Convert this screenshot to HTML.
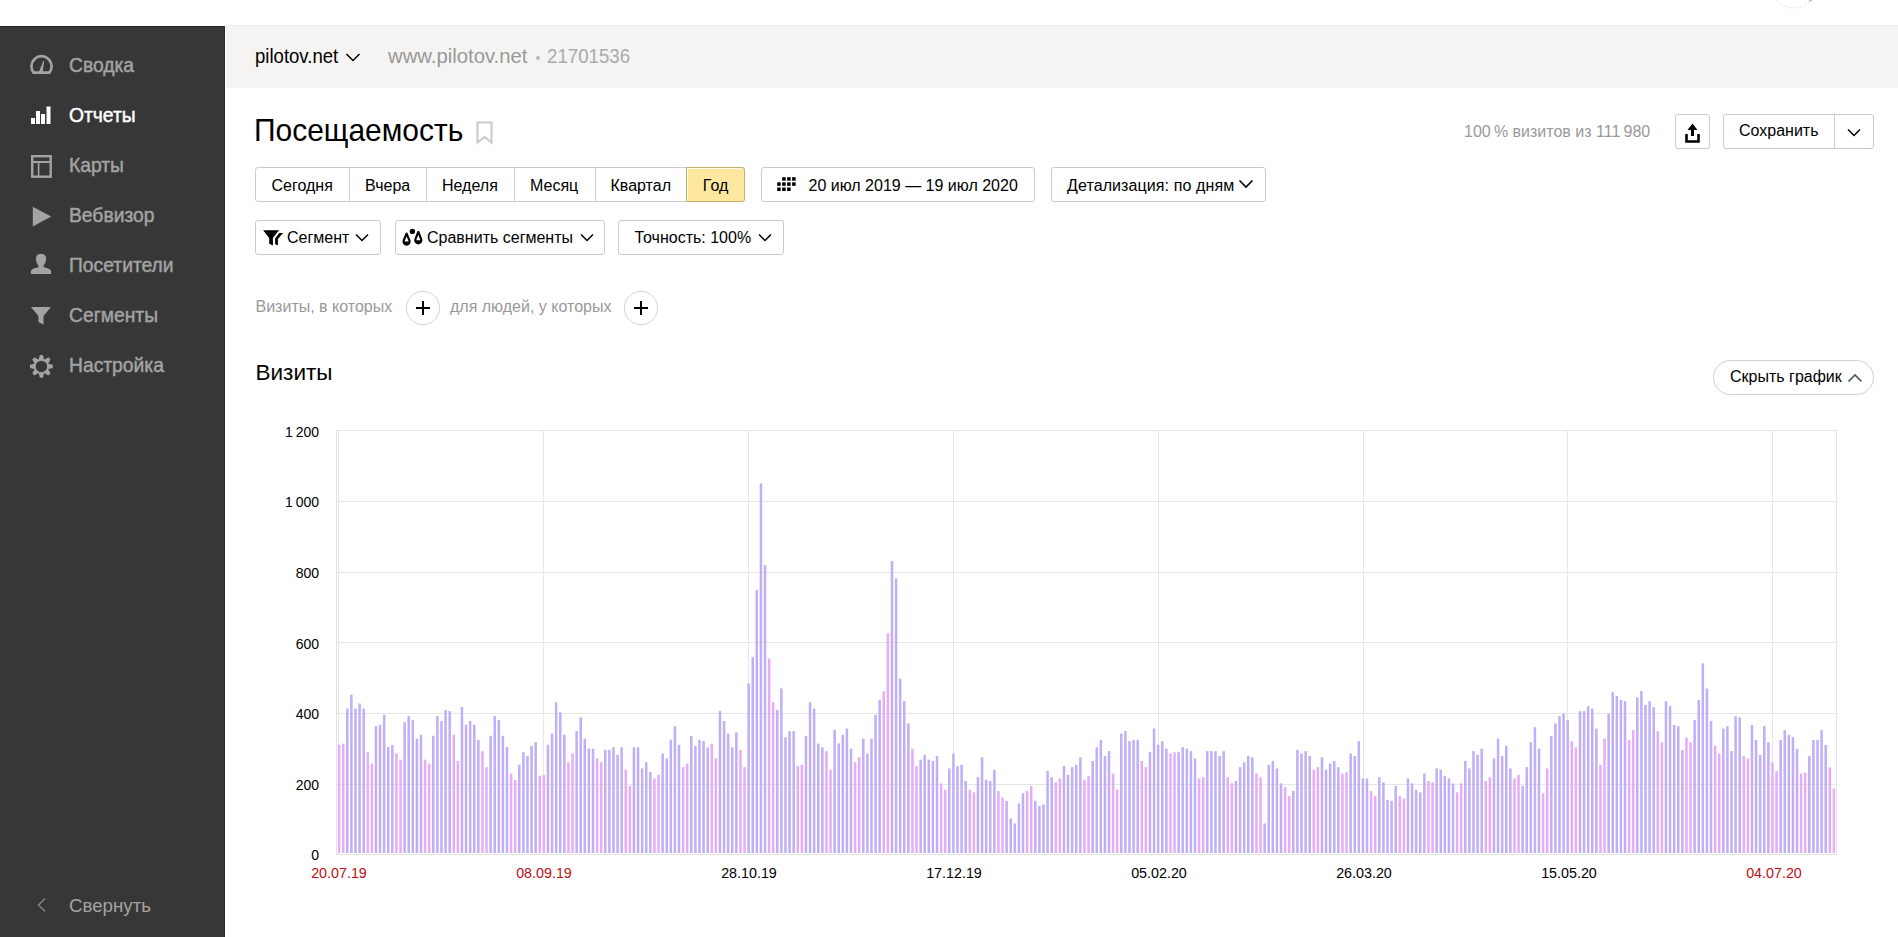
<!DOCTYPE html>
<html><head><meta charset="utf-8">
<style>
*{box-sizing:border-box;margin:0;padding:0}
html,body{width:1898px;height:937px;overflow:hidden;background:#fff;font-family:"Liberation Sans",sans-serif;color:#000}
.abs{position:absolute}
#side{left:0;top:26px;width:225px;height:911px;background:#373737;border-top:1px solid #262626;border-right:1px solid #2a2a2a}
#hdr{left:226px;top:25px;width:1672px;height:63px;background:#f5f4f2;border-top:1px solid #ececec}
.t{position:absolute;white-space:nowrap;line-height:1}
.btn{position:absolute;height:35px;border:1px solid #cbcbcb;border-radius:3px;background:#fff}
</style></head><body>
<svg class="abs" style="left:0;top:0" width="1898" height="20"><circle cx="1794" cy="-16.25" r="24.25" fill="none" stroke="#e2e2e2" stroke-width="1" stroke-dasharray="2.5 2.5"/><path d="M1807 -1 L1814 -1 L1810.5 2 Z" fill="#c4c4c4"/></svg>
<div id="side" class="abs"></div>
<div class="t" style="left:69px;top:55.66px;font-size:19.3px;color:#a3a3a3;font-weight:400;-webkit-text-stroke:.45px #a3a3a3;">Сводка</div>
<div class="t" style="left:69px;top:105.66px;font-size:19.3px;color:#fff;font-weight:400;-webkit-text-stroke:.45px #fff;">Отчеты</div>
<div class="t" style="left:69px;top:155.66px;font-size:19.3px;color:#a3a3a3;font-weight:400;-webkit-text-stroke:.45px #a3a3a3;">Карты</div>
<div class="t" style="left:69px;top:205.66px;font-size:19.3px;color:#a3a3a3;font-weight:400;-webkit-text-stroke:.45px #a3a3a3;">Вебвизор</div>
<div class="t" style="left:69px;top:255.66px;font-size:19.3px;color:#a3a3a3;font-weight:400;-webkit-text-stroke:.45px #a3a3a3;">Посетители</div>
<div class="t" style="left:69px;top:305.66px;font-size:19.3px;color:#a3a3a3;font-weight:400;-webkit-text-stroke:.45px #a3a3a3;">Сегменты</div>
<div class="t" style="left:69px;top:355.66px;font-size:19.3px;color:#a3a3a3;font-weight:400;-webkit-text-stroke:.45px #a3a3a3;">Настройка</div>
<svg class="abs" style="left:0;top:0" width="225" height="937">
<path d="M33.6 72.6 A 10.1 10.1 0 1 1 49.4 72.6 Z" fill="none" stroke="#a3a3a3" stroke-width="2.7" stroke-linejoin="round"/>
<path d="M38.6 72.5 L42.6 72.5 L44.2 61 L43.4 61 Z" fill="#a3a3a3"/>
<rect x="31" y="118" width="4" height="6" fill="#fff"/><rect x="36" y="111" width="4" height="13" fill="#fff"/><rect x="41" y="114" width="4" height="10" fill="#fff"/><rect x="46.5" y="106.5" width="4" height="17.5" fill="#fff"/>
<rect x="32.2" y="156.2" width="18.5" height="20.5" fill="none" stroke="#a3a3a3" stroke-width="2.4"/>
<rect x="33" y="161" width="17" height="2" fill="#a3a3a3"/><rect x="37.8" y="162" width="1.6" height="14" fill="#a3a3a3"/>
<path d="M32.8 206.8 L51.2 216.6 L32.8 226.5 Z" fill="#a3a3a3"/>
<path d="M30.9 274 L30.9 271.2 Q31.3 268.4 37.6 267.4 Q38.6 267 38.5 265.8 Q35.8 262.6 35.9 258.8 Q36.1 253.7 41 253.7 Q45.9 253.7 46.1 258.8 Q46.2 262.6 43.5 265.8 Q43.4 267 44.4 267.4 Q50.7 268.4 51.1 271.2 L51.1 274 Z" fill="#a3a3a3"/>
<path d="M30.9 306.9 L50.9 306.9 L43.6 316 L43.4 324.4 L38.4 321.9 L38.4 316 Z" fill="#a3a3a3"/>
<g transform="translate(41.4 366.4)"><circle r="6.55" fill="none" stroke="#a3a3a3" stroke-width="1.6"/>
<path d="M-2.9 -6.2 L2.9 -6.2 L1.55 -11.4 L-1.55 -11.4 Z" fill="#a3a3a3" transform="rotate(0)"/><path d="M-2.9 -6.2 L2.9 -6.2 L1.55 -11.4 L-1.55 -11.4 Z" fill="#a3a3a3" transform="rotate(45)"/><path d="M-2.9 -6.2 L2.9 -6.2 L1.55 -11.4 L-1.55 -11.4 Z" fill="#a3a3a3" transform="rotate(90)"/><path d="M-2.9 -6.2 L2.9 -6.2 L1.55 -11.4 L-1.55 -11.4 Z" fill="#a3a3a3" transform="rotate(135)"/><path d="M-2.9 -6.2 L2.9 -6.2 L1.55 -11.4 L-1.55 -11.4 Z" fill="#a3a3a3" transform="rotate(180)"/><path d="M-2.9 -6.2 L2.9 -6.2 L1.55 -11.4 L-1.55 -11.4 Z" fill="#a3a3a3" transform="rotate(225)"/><path d="M-2.9 -6.2 L2.9 -6.2 L1.55 -11.4 L-1.55 -11.4 Z" fill="#a3a3a3" transform="rotate(270)"/><path d="M-2.9 -6.2 L2.9 -6.2 L1.55 -11.4 L-1.55 -11.4 Z" fill="#a3a3a3" transform="rotate(315)"/></g>
<path d="M45 898.5 L38.5 905 L45 911.5" fill="none" stroke="#8a8a8a" stroke-width="1.3"/>
</svg>
<div class="t" style="left:69px;top:896.87px;font-size:18.7px;color:#a3a3a3;font-weight:400;">Свернуть</div>
<div id="hdr" class="abs"></div>
<div class="t" style="left:255px;top:45.71px;font-size:20.3px;color:#000;font-weight:400;transform:scaleX(0.915);transform-origin:0 0;">pilotov.net</div>
<svg class="abs" style="left:340px;top:48px" width="30" height="20"><path d="M6.5 6 L13 12.5 L19.5 6" fill="none" stroke="#000" stroke-width="1.5"/></svg>
<div class="t" style="left:388px;top:45.71px;font-size:20.3px;color:#999;font-weight:400;">www.pilotov.net</div>
<div class="abs" style="left:535.5px;top:55.5px;width:4px;height:4px;border-radius:2px;background:#bbb"></div>
<div class="t" style="left:547.3px;top:45.71px;font-size:20.3px;color:#aaa;font-weight:400;transform:scaleX(0.92);transform-origin:0 0;">21701536</div>
<div class="t" style="left:254px;top:115.08px;font-size:30.5px;color:#000;font-weight:400;transform:scaleX(0.982);transform-origin:0 0;">Посещаемость</div>
<svg class="abs" style="left:470px;top:118px" width="30" height="30"><path d="M7.5 4.5 L21.5 4.5 L21.5 24.5 L14.5 19 L7.5 24.5 Z" fill="none" stroke="#ccc" stroke-width="2.2"/></svg>
<div class="t" style="left:1464px;top:123.85px;font-size:16px;color:#999;font-weight:400;">100&thinsp;% визитов из 111&thinsp;980</div>
<div class="btn" style="left:1675px;top:114px;width:35px"></div>
<svg class="abs" style="left:1675px;top:114px" width="35" height="35"><path d="M17.5 9.5 L22.5 16 L19 16 L19 22 L16 22 L16 16 L12.5 16 Z" fill="#000"/><path d="M11.5 20 L11.5 27.5 L23.5 27.5 L23.5 20" fill="none" stroke="#000" stroke-width="2.6"/></svg>
<div class="btn" style="left:1723px;top:114px;width:151px"></div>
<div class="abs" style="left:1834px;top:115px;width:1px;height:33px;background:#cbcbcb"></div>
<div class="t" style="left:1739px;top:123.15px;font-size:16px;color:#000;font-weight:400;">Сохранить</div>
<svg class="abs" style="left:1834px;top:115.5px" width="40" height="35"><path d="M14 13.5 L20 19.5 L26 13.5" fill="none" stroke="#000" stroke-width="1.5"/></svg>
<div class="abs" style="left:255px;top:167px;width:490px;height:35px;border:1px solid #cbcbcb;border-radius:3px;background:#fff"></div>
<div class="abs" style="left:349px;top:168px;width:1px;height:33px;background:#cbcbcb"></div>
<div class="abs" style="left:426px;top:168px;width:1px;height:33px;background:#cbcbcb"></div>
<div class="abs" style="left:514px;top:168px;width:1px;height:33px;background:#cbcbcb"></div>
<div class="abs" style="left:595px;top:168px;width:1px;height:33px;background:#cbcbcb"></div>
<div class="abs" style="left:686px;top:167px;width:59px;height:35px;background:#fee8a0;border:1px solid #c6b16c;border-radius:0 3px 3px 0;box-shadow:inset 1px 1px 0 #fffbea"></div>
<div class="t" style="left:271.5px;top:177.95px;font-size:16px;color:#000;font-weight:400;">Сегодня</div>
<div class="t" style="left:365px;top:177.95px;font-size:16px;color:#000;font-weight:400;">Вчера</div>
<div class="t" style="left:442px;top:177.95px;font-size:16px;color:#000;font-weight:400;">Неделя</div>
<div class="t" style="left:530px;top:177.95px;font-size:16px;color:#000;font-weight:400;">Месяц</div>
<div class="t" style="left:610.5px;top:177.95px;font-size:16px;color:#000;font-weight:400;">Квартал</div>
<div class="t" style="left:702.8px;top:177.95px;font-size:16px;color:#000;font-weight:400;">Год</div>
<div class="btn" style="left:761px;top:167px;width:274px"></div>
<svg class="abs" style="left:0;top:0" width="1000" height="220"><rect x="782.17" y="177.20" width="3.5" height="3.5" fill="#000"/><rect x="787.14" y="177.20" width="3.5" height="3.5" fill="#000"/><rect x="792.11" y="177.20" width="3.5" height="3.5" fill="#000"/><rect x="777.20" y="182.35" width="3.5" height="3.5" fill="#000"/><rect x="782.17" y="182.35" width="3.5" height="3.5" fill="#000"/><rect x="787.14" y="182.35" width="3.5" height="3.5" fill="#000"/><rect x="792.11" y="182.35" width="3.5" height="3.5" fill="#000"/><rect x="777.20" y="187.50" width="3.5" height="3.5" fill="#000"/><rect x="782.17" y="187.50" width="3.5" height="3.5" fill="#000"/><rect x="787.14" y="187.50" width="3.5" height="3.5" fill="#000"/></svg>
<div class="t" style="left:808.5px;top:177.95px;font-size:16px;color:#000;font-weight:400;">20 июл 2019 — 19 июл 2020</div>
<div class="btn" style="left:1051px;top:167px;width:215px"></div>
<div class="t" style="left:1067px;top:177.95px;font-size:16px;color:#000;font-weight:400;letter-spacing:.1px;">Детализация: по дням</div>
<svg class="abs" style="left:1236px;top:176px" width="20" height="16"><path d="M3.5 4.5 L10 11 L16.5 4.5" fill="none" stroke="#000" stroke-width="1.6"/></svg>
<div class="btn" style="left:255px;top:220px;width:126px"></div>
<svg class="abs" style="left:0;top:0" width="800" height="260"><path d="M263.1 230.2 L279 230.2 L272.9 238 L272.9 245.4 L269.2 243.8 L269.2 238 Z" fill="#000"/><path d="M279.3 233 L283 233 L277.9 239 L277.9 245.4 L275.1 244 L275.1 238.5 Z" fill="#000"/></svg>
<div class="t" style="left:287px;top:229.55px;font-size:16px;color:#000;font-weight:400;">Сегмент</div>
<svg class="abs" style="left:351.5px;top:229.2px" width="20" height="16"><path d="M4 5.5 L10 11.5 L16 5.5" fill="none" stroke="#000" stroke-width="1.5"/></svg>
<div class="btn" style="left:395px;top:220px;width:210px"></div>
<svg class="abs" style="left:0;top:0" width="800" height="260"><path d="M406.6 233.55 L409.42 240.39 A3.05 3.05 0 1 1 403.78 240.39 Z" fill="none" stroke="#000" stroke-width="2.2" stroke-linejoin="round"/><path d="M403.55 241.55 A3.05 3.05 0 0 0 409.65 241.55 Z" fill="#000"/><circle cx="412.4" cy="231.4" r="2.7" fill="#000"/><path d="M418.3 231.95 L421.14 239.13 A3.05 3.05 0 1 1 415.46 239.13 Z" fill="none" stroke="#000" stroke-width="2.2" stroke-linejoin="round"/><path d="M415.25 240.25 A3.05 3.05 0 0 0 421.35 240.25 Z" fill="#000"/></svg>
<div class="t" style="left:427px;top:229.55px;font-size:16px;color:#000;font-weight:400;">Сравнить сегменты</div>
<svg class="abs" style="left:576.5px;top:229.2px" width="20" height="16"><path d="M4 5.5 L10 11.5 L16 5.5" fill="none" stroke="#000" stroke-width="1.5"/></svg>
<div class="btn" style="left:618px;top:220px;width:166px"></div>
<div class="t" style="left:634.5px;top:229.55px;font-size:16px;color:#000;font-weight:400;">Точность: 100%</div>
<svg class="abs" style="left:754.5px;top:229.2px" width="20" height="16"><path d="M4 5.5 L10 11.5 L16 5.5" fill="none" stroke="#000" stroke-width="1.5"/></svg>
<div class="t" style="left:255.5px;top:298.65px;font-size:16px;color:#999;font-weight:400;">Визиты, в которых</div>
<div class="t" style="left:450px;top:298.65px;font-size:16px;color:#999;font-weight:400;">для людей, у которых</div>
<svg class="abs" style="left:404.6px;top:290px" width="36" height="36"><circle cx="18" cy="18" r="16.6" fill="#fff" stroke="#d3d3d3" stroke-width="1"/><path d="M18 11 V25 M11 18 H25" stroke="#000" stroke-width="2"/></svg>
<svg class="abs" style="left:622.5px;top:290px" width="36" height="36"><circle cx="18" cy="18" r="16.6" fill="#fff" stroke="#d3d3d3" stroke-width="1"/><path d="M18 11 V25 M11 18 H25" stroke="#000" stroke-width="2"/></svg>
<div class="t" style="left:255.5px;top:362.15px;font-size:22.5px;color:#000;font-weight:400;">Визиты</div>
<div class="abs" style="left:1713px;top:360px;width:161px;height:35px;border:1px solid #cfcfcf;border-radius:18px;background:#fff"></div>
<div class="t" style="left:1730px;top:369.35px;font-size:16px;color:#000;font-weight:400;">Скрыть график</div>
<svg class="abs" style="left:1844.5px;top:370.5px" width="20" height="16"><path d="M3.5 10.5 L10 4 L16.5 10.5" fill="none" stroke="#555" stroke-width="1.7"/></svg>
<svg class="abs" style="left:0;top:0" width="1898" height="937" shape-rendering="auto"><rect x="336" y="430" width="1501" height="1" fill="#e6e6e6"/><rect x="336" y="501" width="1501" height="1" fill="#e6e6e6"/><rect x="336" y="572" width="1501" height="1" fill="#e6e6e6"/><rect x="336" y="642" width="1501" height="1" fill="#e6e6e6"/><rect x="336" y="713" width="1501" height="1" fill="#e6e6e6"/><rect x="336" y="784" width="1501" height="1" fill="#e6e6e6"/><rect x="336" y="854" width="1501" height="1" fill="#e6e6e6"/><rect x="338" y="430" width="1" height="424" fill="#e6e6e6"/><rect x="543" y="430" width="1" height="424" fill="#e6e6e6"/><rect x="748" y="430" width="1" height="424" fill="#e6e6e6"/><rect x="953" y="430" width="1" height="424" fill="#e6e6e6"/><rect x="1158" y="430" width="1" height="424" fill="#e6e6e6"/><rect x="1363" y="430" width="1" height="424" fill="#e6e6e6"/><rect x="1567" y="430" width="1" height="424" fill="#e6e6e6"/><rect x="1772" y="430" width="1" height="424" fill="#e6e6e6"/><rect x="336" y="430" width="1" height="425" fill="#e3e3e3"/><rect x="1836" y="430" width="1" height="425" fill="#e6e6e6"/><rect x="337.85" y="744.74" width="2.5" height="108.26" fill="#e6acf7"/><rect x="341.95" y="743.67" width="2.5" height="109.33" fill="#e6acf7"/><rect x="346.04" y="708.67" width="2.5" height="144.33" fill="#c0aef7"/><rect x="350.14" y="694.79" width="2.5" height="158.21" fill="#c0aef7"/><rect x="354.23" y="708.67" width="2.5" height="144.33" fill="#c0aef7"/><rect x="358.33" y="703.54" width="2.5" height="149.46" fill="#c0aef7"/><rect x="362.42" y="708.67" width="2.5" height="144.33" fill="#c0aef7"/><rect x="366.52" y="752.21" width="2.5" height="100.79" fill="#e6acf7"/><rect x="370.61" y="763.52" width="2.5" height="89.48" fill="#e6acf7"/><rect x="374.71" y="726.17" width="2.5" height="126.83" fill="#c0aef7"/><rect x="378.80" y="724.67" width="2.5" height="128.33" fill="#c0aef7"/><rect x="382.90" y="714.86" width="2.5" height="138.14" fill="#c0aef7"/><rect x="386.99" y="747.09" width="2.5" height="105.91" fill="#c0aef7"/><rect x="391.09" y="744.95" width="2.5" height="108.05" fill="#c0aef7"/><rect x="395.18" y="753.28" width="2.5" height="99.72" fill="#e6acf7"/><rect x="399.28" y="759.68" width="2.5" height="93.32" fill="#e6acf7"/><rect x="403.37" y="722.11" width="2.5" height="130.89" fill="#c0aef7"/><rect x="407.47" y="716.14" width="2.5" height="136.86" fill="#c0aef7"/><rect x="411.57" y="719.98" width="2.5" height="133.02" fill="#c0aef7"/><rect x="415.66" y="738.55" width="2.5" height="114.45" fill="#c0aef7"/><rect x="419.76" y="734.71" width="2.5" height="118.29" fill="#c0aef7"/><rect x="423.85" y="759.68" width="2.5" height="93.32" fill="#e6acf7"/><rect x="427.95" y="763.52" width="2.5" height="89.48" fill="#e6acf7"/><rect x="432.04" y="735.77" width="2.5" height="117.23" fill="#c0aef7"/><rect x="436.14" y="716.14" width="2.5" height="136.86" fill="#c0aef7"/><rect x="440.23" y="721.05" width="2.5" height="131.95" fill="#c0aef7"/><rect x="444.33" y="709.95" width="2.5" height="143.05" fill="#c0aef7"/><rect x="448.42" y="711.01" width="2.5" height="141.99" fill="#c0aef7"/><rect x="452.52" y="734.71" width="2.5" height="118.29" fill="#e6acf7"/><rect x="456.61" y="760.96" width="2.5" height="92.04" fill="#e6acf7"/><rect x="460.71" y="706.96" width="2.5" height="146.04" fill="#c0aef7"/><rect x="464.80" y="724.67" width="2.5" height="128.33" fill="#c0aef7"/><rect x="468.90" y="721.05" width="2.5" height="131.95" fill="#c0aef7"/><rect x="472.99" y="724.67" width="2.5" height="128.33" fill="#c0aef7"/><rect x="477.09" y="739.83" width="2.5" height="113.17" fill="#c0aef7"/><rect x="481.19" y="751.14" width="2.5" height="101.86" fill="#e6acf7"/><rect x="485.28" y="767.15" width="2.5" height="85.85" fill="#e6acf7"/><rect x="489.38" y="735.77" width="2.5" height="117.23" fill="#c0aef7"/><rect x="493.47" y="716.14" width="2.5" height="136.86" fill="#c0aef7"/><rect x="497.57" y="719.98" width="2.5" height="133.02" fill="#c0aef7"/><rect x="501.66" y="735.77" width="2.5" height="117.23" fill="#c0aef7"/><rect x="505.76" y="747.09" width="2.5" height="105.91" fill="#c0aef7"/><rect x="509.85" y="773.55" width="2.5" height="79.45" fill="#e6acf7"/><rect x="513.95" y="779.96" width="2.5" height="73.04" fill="#e6acf7"/><rect x="518.04" y="764.80" width="2.5" height="88.20" fill="#c0aef7"/><rect x="522.14" y="752.21" width="2.5" height="100.79" fill="#c0aef7"/><rect x="526.23" y="756.05" width="2.5" height="96.95" fill="#c0aef7"/><rect x="530.33" y="746.02" width="2.5" height="106.98" fill="#c0aef7"/><rect x="534.42" y="742.18" width="2.5" height="110.82" fill="#c0aef7"/><rect x="538.52" y="775.90" width="2.5" height="77.10" fill="#e6acf7"/><rect x="542.62" y="774.83" width="2.5" height="78.17" fill="#e6acf7"/><rect x="546.71" y="744.74" width="2.5" height="108.26" fill="#c0aef7"/><rect x="550.81" y="733.64" width="2.5" height="119.36" fill="#c0aef7"/><rect x="554.90" y="702.26" width="2.5" height="150.74" fill="#c0aef7"/><rect x="559.00" y="712.29" width="2.5" height="140.71" fill="#c0aef7"/><rect x="563.09" y="734.71" width="2.5" height="118.29" fill="#c0aef7"/><rect x="567.19" y="762.24" width="2.5" height="90.76" fill="#e6acf7"/><rect x="571.28" y="753.49" width="2.5" height="99.51" fill="#e6acf7"/><rect x="575.38" y="731.08" width="2.5" height="121.92" fill="#c0aef7"/><rect x="579.47" y="717.20" width="2.5" height="135.80" fill="#c0aef7"/><rect x="583.57" y="738.55" width="2.5" height="114.45" fill="#c0aef7"/><rect x="587.66" y="748.58" width="2.5" height="104.42" fill="#c0aef7"/><rect x="591.76" y="748.58" width="2.5" height="104.42" fill="#c0aef7"/><rect x="595.85" y="758.40" width="2.5" height="94.60" fill="#e6acf7"/><rect x="599.95" y="762.24" width="2.5" height="90.76" fill="#e6acf7"/><rect x="604.04" y="749.86" width="2.5" height="103.14" fill="#c0aef7"/><rect x="608.14" y="749.86" width="2.5" height="103.14" fill="#c0aef7"/><rect x="612.24" y="747.30" width="2.5" height="105.70" fill="#c0aef7"/><rect x="616.33" y="754.77" width="2.5" height="98.23" fill="#c0aef7"/><rect x="620.43" y="747.30" width="2.5" height="105.70" fill="#c0aef7"/><rect x="624.52" y="769.71" width="2.5" height="83.29" fill="#e6acf7"/><rect x="628.62" y="785.93" width="2.5" height="67.07" fill="#e6acf7"/><rect x="632.71" y="747.30" width="2.5" height="105.70" fill="#c0aef7"/><rect x="636.81" y="747.30" width="2.5" height="105.70" fill="#c0aef7"/><rect x="640.90" y="768.43" width="2.5" height="84.57" fill="#c0aef7"/><rect x="645.00" y="762.24" width="2.5" height="90.76" fill="#c0aef7"/><rect x="649.09" y="772.06" width="2.5" height="80.94" fill="#c0aef7"/><rect x="653.19" y="778.46" width="2.5" height="74.54" fill="#e6acf7"/><rect x="657.28" y="774.83" width="2.5" height="78.17" fill="#e6acf7"/><rect x="661.38" y="753.49" width="2.5" height="99.51" fill="#c0aef7"/><rect x="665.47" y="758.40" width="2.5" height="94.60" fill="#c0aef7"/><rect x="669.57" y="739.83" width="2.5" height="113.17" fill="#c0aef7"/><rect x="673.66" y="726.17" width="2.5" height="126.83" fill="#c0aef7"/><rect x="677.76" y="744.74" width="2.5" height="108.26" fill="#c0aef7"/><rect x="681.86" y="767.15" width="2.5" height="85.85" fill="#e6acf7"/><rect x="685.95" y="763.52" width="2.5" height="89.48" fill="#e6acf7"/><rect x="690.05" y="735.99" width="2.5" height="117.01" fill="#c0aef7"/><rect x="694.14" y="746.02" width="2.5" height="106.98" fill="#c0aef7"/><rect x="698.24" y="739.83" width="2.5" height="113.17" fill="#c0aef7"/><rect x="702.33" y="741.11" width="2.5" height="111.89" fill="#c0aef7"/><rect x="706.43" y="747.30" width="2.5" height="105.70" fill="#c0aef7"/><rect x="710.52" y="743.67" width="2.5" height="109.33" fill="#e6acf7"/><rect x="714.62" y="758.40" width="2.5" height="94.60" fill="#e6acf7"/><rect x="718.71" y="711.01" width="2.5" height="141.99" fill="#c0aef7"/><rect x="722.81" y="721.05" width="2.5" height="131.95" fill="#c0aef7"/><rect x="726.90" y="733.64" width="2.5" height="119.36" fill="#c0aef7"/><rect x="731.00" y="747.30" width="2.5" height="105.70" fill="#c0aef7"/><rect x="735.09" y="732.36" width="2.5" height="120.64" fill="#c0aef7"/><rect x="739.19" y="749.86" width="2.5" height="103.14" fill="#e6acf7"/><rect x="743.28" y="767.15" width="2.5" height="85.85" fill="#e6acf7"/><rect x="747.38" y="683.48" width="2.5" height="169.52" fill="#c0aef7"/><rect x="751.48" y="657.19" width="2.5" height="195.81" fill="#c0aef7"/><rect x="755.57" y="589.96" width="2.5" height="263.04" fill="#c0aef7"/><rect x="759.67" y="483.45" width="2.5" height="369.55" fill="#c0aef7"/><rect x="763.76" y="564.98" width="2.5" height="288.02" fill="#c0aef7"/><rect x="767.86" y="658.47" width="2.5" height="194.53" fill="#e6acf7"/><rect x="771.95" y="702.26" width="2.5" height="150.74" fill="#e6acf7"/><rect x="776.05" y="709.95" width="2.5" height="143.05" fill="#c0aef7"/><rect x="780.14" y="688.39" width="2.5" height="164.61" fill="#c0aef7"/><rect x="784.24" y="737.27" width="2.5" height="115.73" fill="#c0aef7"/><rect x="788.33" y="731.08" width="2.5" height="121.92" fill="#c0aef7"/><rect x="792.43" y="731.08" width="2.5" height="121.92" fill="#c0aef7"/><rect x="796.52" y="766.08" width="2.5" height="86.92" fill="#e6acf7"/><rect x="800.62" y="764.80" width="2.5" height="88.20" fill="#e6acf7"/><rect x="804.71" y="735.99" width="2.5" height="117.01" fill="#c0aef7"/><rect x="808.81" y="702.26" width="2.5" height="150.74" fill="#c0aef7"/><rect x="812.90" y="708.67" width="2.5" height="144.33" fill="#c0aef7"/><rect x="817.00" y="743.46" width="2.5" height="109.54" fill="#c0aef7"/><rect x="821.10" y="747.30" width="2.5" height="105.70" fill="#c0aef7"/><rect x="825.19" y="751.14" width="2.5" height="101.86" fill="#e6acf7"/><rect x="829.29" y="769.71" width="2.5" height="83.29" fill="#e6acf7"/><rect x="833.38" y="729.80" width="2.5" height="123.20" fill="#c0aef7"/><rect x="837.48" y="743.46" width="2.5" height="109.54" fill="#c0aef7"/><rect x="841.57" y="734.71" width="2.5" height="118.29" fill="#c0aef7"/><rect x="845.67" y="728.52" width="2.5" height="124.48" fill="#c0aef7"/><rect x="849.76" y="748.58" width="2.5" height="104.42" fill="#c0aef7"/><rect x="853.86" y="762.24" width="2.5" height="90.76" fill="#e6acf7"/><rect x="857.95" y="757.12" width="2.5" height="95.88" fill="#e6acf7"/><rect x="862.05" y="738.55" width="2.5" height="114.45" fill="#c0aef7"/><rect x="866.14" y="753.49" width="2.5" height="99.51" fill="#c0aef7"/><rect x="870.24" y="738.55" width="2.5" height="114.45" fill="#c0aef7"/><rect x="874.33" y="714.86" width="2.5" height="138.14" fill="#c0aef7"/><rect x="878.43" y="699.91" width="2.5" height="153.09" fill="#c0aef7"/><rect x="882.52" y="691.16" width="2.5" height="161.84" fill="#e6acf7"/><rect x="886.62" y="633.29" width="2.5" height="219.71" fill="#e6acf7"/><rect x="890.72" y="561.14" width="2.5" height="291.86" fill="#c0aef7"/><rect x="894.81" y="578.43" width="2.5" height="274.57" fill="#c0aef7"/><rect x="898.91" y="678.57" width="2.5" height="174.43" fill="#c0aef7"/><rect x="903.00" y="700.98" width="2.5" height="152.02" fill="#c0aef7"/><rect x="907.10" y="723.39" width="2.5" height="129.61" fill="#c0aef7"/><rect x="911.19" y="748.58" width="2.5" height="104.42" fill="#e6acf7"/><rect x="915.29" y="766.08" width="2.5" height="86.92" fill="#e6acf7"/><rect x="919.38" y="759.68" width="2.5" height="93.32" fill="#c0aef7"/><rect x="923.48" y="754.77" width="2.5" height="98.23" fill="#c0aef7"/><rect x="927.57" y="759.68" width="2.5" height="93.32" fill="#c0aef7"/><rect x="931.67" y="760.96" width="2.5" height="92.04" fill="#c0aef7"/><rect x="935.76" y="756.05" width="2.5" height="96.95" fill="#c0aef7"/><rect x="939.86" y="783.37" width="2.5" height="69.63" fill="#e6acf7"/><rect x="943.95" y="789.56" width="2.5" height="63.44" fill="#e6acf7"/><rect x="948.05" y="768.43" width="2.5" height="84.57" fill="#c0aef7"/><rect x="952.14" y="753.49" width="2.5" height="99.51" fill="#c0aef7"/><rect x="956.24" y="766.08" width="2.5" height="86.92" fill="#c0aef7"/><rect x="960.34" y="764.80" width="2.5" height="88.20" fill="#c0aef7"/><rect x="964.43" y="781.02" width="2.5" height="71.98" fill="#c0aef7"/><rect x="968.53" y="789.78" width="2.5" height="63.22" fill="#e6acf7"/><rect x="972.62" y="792.34" width="2.5" height="60.66" fill="#e6acf7"/><rect x="976.72" y="777.18" width="2.5" height="75.82" fill="#c0aef7"/><rect x="980.81" y="757.33" width="2.5" height="95.67" fill="#c0aef7"/><rect x="984.91" y="779.74" width="2.5" height="73.26" fill="#c0aef7"/><rect x="989.00" y="781.02" width="2.5" height="71.98" fill="#c0aef7"/><rect x="993.10" y="769.71" width="2.5" height="83.29" fill="#c0aef7"/><rect x="997.19" y="791.06" width="2.5" height="61.94" fill="#e6acf7"/><rect x="1001.29" y="797.25" width="2.5" height="55.75" fill="#e6acf7"/><rect x="1005.38" y="800.88" width="2.5" height="52.12" fill="#c0aef7"/><rect x="1009.48" y="818.38" width="2.5" height="34.62" fill="#c0aef7"/><rect x="1013.57" y="823.50" width="2.5" height="29.50" fill="#c0aef7"/><rect x="1017.67" y="803.44" width="2.5" height="49.56" fill="#c0aef7"/><rect x="1021.77" y="793.40" width="2.5" height="59.60" fill="#c0aef7"/><rect x="1025.86" y="791.06" width="2.5" height="61.94" fill="#e6acf7"/><rect x="1029.96" y="785.93" width="2.5" height="67.07" fill="#e6acf7"/><rect x="1034.05" y="800.88" width="2.5" height="52.12" fill="#c0aef7"/><rect x="1038.15" y="806.00" width="2.5" height="47.00" fill="#c0aef7"/><rect x="1042.24" y="804.72" width="2.5" height="48.28" fill="#c0aef7"/><rect x="1046.34" y="770.99" width="2.5" height="82.01" fill="#c0aef7"/><rect x="1050.43" y="777.18" width="2.5" height="75.82" fill="#c0aef7"/><rect x="1054.53" y="782.31" width="2.5" height="70.69" fill="#e6acf7"/><rect x="1058.62" y="778.46" width="2.5" height="74.54" fill="#e6acf7"/><rect x="1062.72" y="766.08" width="2.5" height="86.92" fill="#c0aef7"/><rect x="1066.81" y="774.83" width="2.5" height="78.17" fill="#c0aef7"/><rect x="1070.91" y="767.15" width="2.5" height="85.85" fill="#c0aef7"/><rect x="1075.00" y="764.80" width="2.5" height="88.20" fill="#c0aef7"/><rect x="1079.10" y="757.33" width="2.5" height="95.67" fill="#c0aef7"/><rect x="1083.19" y="779.74" width="2.5" height="73.26" fill="#e6acf7"/><rect x="1087.29" y="775.90" width="2.5" height="77.10" fill="#e6acf7"/><rect x="1091.39" y="760.96" width="2.5" height="92.04" fill="#c0aef7"/><rect x="1095.48" y="747.30" width="2.5" height="105.70" fill="#c0aef7"/><rect x="1099.58" y="739.83" width="2.5" height="113.17" fill="#c0aef7"/><rect x="1103.67" y="756.05" width="2.5" height="96.95" fill="#c0aef7"/><rect x="1107.77" y="751.14" width="2.5" height="101.86" fill="#c0aef7"/><rect x="1111.86" y="773.55" width="2.5" height="79.45" fill="#e6acf7"/><rect x="1115.96" y="789.78" width="2.5" height="63.22" fill="#e6acf7"/><rect x="1120.05" y="733.64" width="2.5" height="119.36" fill="#c0aef7"/><rect x="1124.15" y="731.08" width="2.5" height="121.92" fill="#c0aef7"/><rect x="1128.24" y="741.11" width="2.5" height="111.89" fill="#c0aef7"/><rect x="1132.34" y="739.83" width="2.5" height="113.17" fill="#c0aef7"/><rect x="1136.43" y="739.83" width="2.5" height="113.17" fill="#c0aef7"/><rect x="1140.53" y="760.96" width="2.5" height="92.04" fill="#e6acf7"/><rect x="1144.62" y="767.15" width="2.5" height="85.85" fill="#e6acf7"/><rect x="1148.72" y="752.21" width="2.5" height="100.79" fill="#c0aef7"/><rect x="1152.81" y="728.52" width="2.5" height="124.48" fill="#c0aef7"/><rect x="1156.91" y="744.74" width="2.5" height="108.26" fill="#c0aef7"/><rect x="1161.01" y="741.11" width="2.5" height="111.89" fill="#c0aef7"/><rect x="1165.10" y="748.58" width="2.5" height="104.42" fill="#c0aef7"/><rect x="1169.20" y="753.49" width="2.5" height="99.51" fill="#e6acf7"/><rect x="1173.29" y="752.21" width="2.5" height="100.79" fill="#e6acf7"/><rect x="1177.39" y="752.21" width="2.5" height="100.79" fill="#c0aef7"/><rect x="1181.48" y="747.30" width="2.5" height="105.70" fill="#c0aef7"/><rect x="1185.58" y="748.58" width="2.5" height="104.42" fill="#c0aef7"/><rect x="1189.67" y="751.14" width="2.5" height="101.86" fill="#c0aef7"/><rect x="1193.77" y="758.40" width="2.5" height="94.60" fill="#c0aef7"/><rect x="1197.86" y="778.46" width="2.5" height="74.54" fill="#e6acf7"/><rect x="1201.96" y="777.18" width="2.5" height="75.82" fill="#e6acf7"/><rect x="1206.05" y="751.14" width="2.5" height="101.86" fill="#c0aef7"/><rect x="1210.15" y="751.14" width="2.5" height="101.86" fill="#c0aef7"/><rect x="1214.24" y="751.14" width="2.5" height="101.86" fill="#c0aef7"/><rect x="1218.34" y="756.05" width="2.5" height="96.95" fill="#c0aef7"/><rect x="1222.43" y="751.14" width="2.5" height="101.86" fill="#c0aef7"/><rect x="1226.53" y="777.18" width="2.5" height="75.82" fill="#e6acf7"/><rect x="1230.63" y="783.37" width="2.5" height="69.63" fill="#e6acf7"/><rect x="1234.72" y="781.02" width="2.5" height="71.98" fill="#c0aef7"/><rect x="1238.82" y="767.15" width="2.5" height="85.85" fill="#c0aef7"/><rect x="1242.91" y="762.24" width="2.5" height="90.76" fill="#c0aef7"/><rect x="1247.01" y="756.05" width="2.5" height="96.95" fill="#c0aef7"/><rect x="1251.10" y="757.33" width="2.5" height="95.67" fill="#c0aef7"/><rect x="1255.20" y="773.55" width="2.5" height="79.45" fill="#e6acf7"/><rect x="1259.29" y="777.18" width="2.5" height="75.82" fill="#e6acf7"/><rect x="1263.39" y="823.50" width="2.5" height="29.50" fill="#c0aef7"/><rect x="1267.48" y="764.80" width="2.5" height="88.20" fill="#c0aef7"/><rect x="1271.58" y="760.96" width="2.5" height="92.04" fill="#c0aef7"/><rect x="1275.67" y="768.43" width="2.5" height="84.57" fill="#c0aef7"/><rect x="1279.77" y="783.37" width="2.5" height="69.63" fill="#c0aef7"/><rect x="1283.86" y="787.21" width="2.5" height="65.79" fill="#e6acf7"/><rect x="1287.96" y="795.97" width="2.5" height="57.03" fill="#e6acf7"/><rect x="1292.05" y="791.06" width="2.5" height="61.94" fill="#c0aef7"/><rect x="1296.15" y="749.86" width="2.5" height="103.14" fill="#c0aef7"/><rect x="1300.25" y="753.49" width="2.5" height="99.51" fill="#c0aef7"/><rect x="1304.34" y="751.14" width="2.5" height="101.86" fill="#c0aef7"/><rect x="1308.44" y="756.05" width="2.5" height="96.95" fill="#c0aef7"/><rect x="1312.53" y="769.71" width="2.5" height="83.29" fill="#e6acf7"/><rect x="1316.63" y="767.15" width="2.5" height="85.85" fill="#e6acf7"/><rect x="1320.72" y="757.33" width="2.5" height="95.67" fill="#c0aef7"/><rect x="1324.82" y="769.71" width="2.5" height="83.29" fill="#c0aef7"/><rect x="1328.91" y="763.52" width="2.5" height="89.48" fill="#c0aef7"/><rect x="1333.01" y="760.96" width="2.5" height="92.04" fill="#c0aef7"/><rect x="1337.10" y="767.15" width="2.5" height="85.85" fill="#c0aef7"/><rect x="1341.20" y="773.55" width="2.5" height="79.45" fill="#e6acf7"/><rect x="1345.29" y="772.27" width="2.5" height="80.73" fill="#e6acf7"/><rect x="1349.39" y="753.49" width="2.5" height="99.51" fill="#c0aef7"/><rect x="1353.48" y="756.05" width="2.5" height="96.95" fill="#c0aef7"/><rect x="1357.58" y="741.11" width="2.5" height="111.89" fill="#c0aef7"/><rect x="1361.67" y="778.46" width="2.5" height="74.54" fill="#c0aef7"/><rect x="1365.77" y="778.46" width="2.5" height="74.54" fill="#c0aef7"/><rect x="1369.87" y="791.06" width="2.5" height="61.94" fill="#e6acf7"/><rect x="1373.96" y="795.97" width="2.5" height="57.03" fill="#e6acf7"/><rect x="1378.06" y="777.18" width="2.5" height="75.82" fill="#c0aef7"/><rect x="1382.15" y="782.31" width="2.5" height="70.69" fill="#c0aef7"/><rect x="1386.25" y="799.81" width="2.5" height="53.19" fill="#c0aef7"/><rect x="1390.34" y="800.88" width="2.5" height="52.12" fill="#c0aef7"/><rect x="1394.44" y="785.93" width="2.5" height="67.07" fill="#c0aef7"/><rect x="1398.53" y="795.97" width="2.5" height="57.03" fill="#e6acf7"/><rect x="1402.63" y="798.53" width="2.5" height="54.47" fill="#e6acf7"/><rect x="1406.72" y="778.46" width="2.5" height="74.54" fill="#c0aef7"/><rect x="1410.82" y="783.37" width="2.5" height="69.63" fill="#c0aef7"/><rect x="1414.91" y="789.78" width="2.5" height="63.22" fill="#c0aef7"/><rect x="1419.01" y="792.34" width="2.5" height="60.66" fill="#c0aef7"/><rect x="1423.10" y="773.55" width="2.5" height="79.45" fill="#c0aef7"/><rect x="1427.20" y="781.02" width="2.5" height="71.98" fill="#e6acf7"/><rect x="1431.30" y="782.31" width="2.5" height="70.69" fill="#e6acf7"/><rect x="1435.39" y="768.43" width="2.5" height="84.57" fill="#c0aef7"/><rect x="1439.49" y="769.71" width="2.5" height="83.29" fill="#c0aef7"/><rect x="1443.58" y="775.90" width="2.5" height="77.10" fill="#c0aef7"/><rect x="1447.68" y="778.46" width="2.5" height="74.54" fill="#c0aef7"/><rect x="1451.77" y="783.37" width="2.5" height="69.63" fill="#c0aef7"/><rect x="1455.87" y="792.34" width="2.5" height="60.66" fill="#e6acf7"/><rect x="1459.96" y="783.37" width="2.5" height="69.63" fill="#e6acf7"/><rect x="1464.06" y="760.96" width="2.5" height="92.04" fill="#c0aef7"/><rect x="1468.15" y="768.43" width="2.5" height="84.57" fill="#c0aef7"/><rect x="1472.25" y="751.14" width="2.5" height="101.86" fill="#c0aef7"/><rect x="1476.34" y="754.77" width="2.5" height="98.23" fill="#c0aef7"/><rect x="1480.44" y="748.58" width="2.5" height="104.42" fill="#c0aef7"/><rect x="1484.53" y="781.02" width="2.5" height="71.98" fill="#e6acf7"/><rect x="1488.63" y="777.18" width="2.5" height="75.82" fill="#e6acf7"/><rect x="1492.72" y="758.40" width="2.5" height="94.60" fill="#c0aef7"/><rect x="1496.82" y="738.55" width="2.5" height="114.45" fill="#c0aef7"/><rect x="1500.92" y="756.05" width="2.5" height="96.95" fill="#c0aef7"/><rect x="1505.01" y="746.02" width="2.5" height="106.98" fill="#c0aef7"/><rect x="1509.11" y="768.43" width="2.5" height="84.57" fill="#c0aef7"/><rect x="1513.20" y="778.46" width="2.5" height="74.54" fill="#e6acf7"/><rect x="1517.30" y="774.83" width="2.5" height="78.17" fill="#e6acf7"/><rect x="1521.39" y="785.93" width="2.5" height="67.07" fill="#c0aef7"/><rect x="1525.49" y="767.15" width="2.5" height="85.85" fill="#c0aef7"/><rect x="1529.58" y="742.18" width="2.5" height="110.82" fill="#c0aef7"/><rect x="1533.68" y="727.24" width="2.5" height="125.76" fill="#c0aef7"/><rect x="1537.77" y="748.58" width="2.5" height="104.42" fill="#c0aef7"/><rect x="1541.87" y="793.40" width="2.5" height="59.60" fill="#e6acf7"/><rect x="1545.96" y="768.43" width="2.5" height="84.57" fill="#e6acf7"/><rect x="1550.06" y="735.99" width="2.5" height="117.01" fill="#c0aef7"/><rect x="1554.15" y="723.39" width="2.5" height="129.61" fill="#c0aef7"/><rect x="1558.25" y="716.14" width="2.5" height="136.86" fill="#c0aef7"/><rect x="1562.34" y="713.58" width="2.5" height="139.42" fill="#c0aef7"/><rect x="1566.44" y="719.97" width="2.5" height="133.03" fill="#c0aef7"/><rect x="1570.54" y="741.20" width="2.5" height="111.80" fill="#e6acf7"/><rect x="1574.63" y="747.32" width="2.5" height="105.68" fill="#e6acf7"/><rect x="1578.73" y="711.22" width="2.5" height="141.78" fill="#c0aef7"/><rect x="1582.82" y="711.22" width="2.5" height="141.78" fill="#c0aef7"/><rect x="1586.92" y="706.19" width="2.5" height="146.81" fill="#c0aef7"/><rect x="1591.01" y="708.60" width="2.5" height="144.40" fill="#c0aef7"/><rect x="1595.11" y="728.73" width="2.5" height="124.27" fill="#c0aef7"/><rect x="1599.20" y="764.82" width="2.5" height="88.18" fill="#e6acf7"/><rect x="1603.30" y="738.57" width="2.5" height="114.43" fill="#e6acf7"/><rect x="1607.39" y="713.63" width="2.5" height="139.37" fill="#c0aef7"/><rect x="1611.49" y="692.19" width="2.5" height="160.81" fill="#c0aef7"/><rect x="1615.58" y="695.91" width="2.5" height="157.09" fill="#c0aef7"/><rect x="1619.68" y="699.85" width="2.5" height="153.15" fill="#c0aef7"/><rect x="1623.77" y="701.16" width="2.5" height="151.84" fill="#c0aef7"/><rect x="1627.87" y="739.88" width="2.5" height="113.12" fill="#e6acf7"/><rect x="1631.96" y="730.04" width="2.5" height="122.96" fill="#e6acf7"/><rect x="1636.06" y="697.22" width="2.5" height="155.78" fill="#c0aef7"/><rect x="1640.16" y="691.10" width="2.5" height="161.90" fill="#c0aef7"/><rect x="1644.25" y="704.88" width="2.5" height="148.12" fill="#c0aef7"/><rect x="1648.35" y="701.16" width="2.5" height="151.84" fill="#c0aef7"/><rect x="1652.44" y="707.29" width="2.5" height="145.71" fill="#c0aef7"/><rect x="1656.54" y="731.13" width="2.5" height="121.87" fill="#e6acf7"/><rect x="1660.63" y="742.29" width="2.5" height="110.71" fill="#e6acf7"/><rect x="1664.73" y="701.16" width="2.5" height="151.84" fill="#c0aef7"/><rect x="1668.82" y="706.19" width="2.5" height="146.81" fill="#c0aef7"/><rect x="1672.92" y="725.01" width="2.5" height="127.99" fill="#c0aef7"/><rect x="1677.01" y="726.10" width="2.5" height="126.90" fill="#c0aef7"/><rect x="1681.11" y="749.95" width="2.5" height="103.05" fill="#c0aef7"/><rect x="1685.20" y="737.48" width="2.5" height="115.52" fill="#e6acf7"/><rect x="1689.30" y="742.29" width="2.5" height="110.71" fill="#e6acf7"/><rect x="1693.39" y="719.97" width="2.5" height="133.03" fill="#c0aef7"/><rect x="1697.49" y="699.85" width="2.5" height="153.15" fill="#c0aef7"/><rect x="1701.58" y="663.31" width="2.5" height="189.69" fill="#c0aef7"/><rect x="1705.68" y="688.47" width="2.5" height="164.53" fill="#c0aef7"/><rect x="1709.78" y="721.07" width="2.5" height="131.93" fill="#c0aef7"/><rect x="1713.87" y="746.01" width="2.5" height="106.99" fill="#e6acf7"/><rect x="1717.97" y="753.67" width="2.5" height="99.33" fill="#e6acf7"/><rect x="1722.06" y="728.73" width="2.5" height="124.27" fill="#c0aef7"/><rect x="1726.16" y="726.10" width="2.5" height="126.90" fill="#c0aef7"/><rect x="1730.25" y="751.04" width="2.5" height="101.96" fill="#c0aef7"/><rect x="1734.35" y="716.26" width="2.5" height="136.74" fill="#c0aef7"/><rect x="1738.44" y="717.35" width="2.5" height="135.65" fill="#c0aef7"/><rect x="1742.54" y="756.07" width="2.5" height="96.93" fill="#e6acf7"/><rect x="1746.63" y="758.70" width="2.5" height="94.30" fill="#e6acf7"/><rect x="1750.73" y="725.01" width="2.5" height="127.99" fill="#c0aef7"/><rect x="1754.82" y="739.88" width="2.5" height="113.12" fill="#c0aef7"/><rect x="1758.92" y="754.98" width="2.5" height="98.02" fill="#c0aef7"/><rect x="1763.01" y="726.10" width="2.5" height="126.90" fill="#c0aef7"/><rect x="1767.11" y="742.29" width="2.5" height="110.71" fill="#c0aef7"/><rect x="1771.20" y="762.27" width="2.5" height="90.73" fill="#e6acf7"/><rect x="1775.30" y="771.02" width="2.5" height="81.98" fill="#e6acf7"/><rect x="1779.40" y="739.94" width="2.5" height="113.06" fill="#c0aef7"/><rect x="1783.49" y="730.09" width="2.5" height="122.91" fill="#c0aef7"/><rect x="1787.59" y="734.90" width="2.5" height="118.10" fill="#c0aef7"/><rect x="1791.68" y="737.31" width="2.5" height="115.69" fill="#c0aef7"/><rect x="1795.78" y="748.70" width="2.5" height="104.30" fill="#c0aef7"/><rect x="1799.87" y="773.65" width="2.5" height="79.35" fill="#e6acf7"/><rect x="1803.97" y="772.56" width="2.5" height="80.44" fill="#e6acf7"/><rect x="1808.06" y="756.14" width="2.5" height="96.86" fill="#c0aef7"/><rect x="1812.16" y="739.94" width="2.5" height="113.06" fill="#c0aef7"/><rect x="1816.25" y="739.94" width="2.5" height="113.06" fill="#c0aef7"/><rect x="1820.35" y="730.09" width="2.5" height="122.91" fill="#c0aef7"/><rect x="1824.44" y="744.97" width="2.5" height="108.03" fill="#c0aef7"/><rect x="1828.54" y="767.30" width="2.5" height="85.70" fill="#e6acf7"/><rect x="1832.63" y="788.54" width="2.5" height="64.46" fill="#e6acf7"/></svg>
<div class="t" style="right:1579px;top:424.75px;font-size:14px">1&thinsp;200</div>
<div class="t" style="right:1579px;top:495.36px;font-size:14px">1&thinsp;000</div>
<div class="t" style="right:1579px;top:565.98px;font-size:14px">800</div>
<div class="t" style="right:1579px;top:636.60px;font-size:14px">600</div>
<div class="t" style="right:1579px;top:707.21px;font-size:14px">400</div>
<div class="t" style="right:1579px;top:777.83px;font-size:14px">200</div>
<div class="t" style="right:1579px;top:848.45px;font-size:14px">0</div>
<div class="t" style="left:299.0px;width:80px;text-align:center;top:865.89px;font-size:14.3px;color:#bd0f15">20.07.19</div>
<div class="t" style="left:504.0px;width:80px;text-align:center;top:865.89px;font-size:14.3px;color:#bd0f15">08.09.19</div>
<div class="t" style="left:709.0px;width:80px;text-align:center;top:865.89px;font-size:14.3px;color:#000">28.10.19</div>
<div class="t" style="left:914.0px;width:80px;text-align:center;top:865.89px;font-size:14.3px;color:#000">17.12.19</div>
<div class="t" style="left:1119.0px;width:80px;text-align:center;top:865.89px;font-size:14.3px;color:#000">05.02.20</div>
<div class="t" style="left:1324.0px;width:80px;text-align:center;top:865.89px;font-size:14.3px;color:#000">26.03.20</div>
<div class="t" style="left:1529.0px;width:80px;text-align:center;top:865.89px;font-size:14.3px;color:#000">15.05.20</div>
<div class="t" style="left:1733.9999999999998px;width:80px;text-align:center;top:865.89px;font-size:14.3px;color:#bd0f15">04.07.20</div>
</body></html>
